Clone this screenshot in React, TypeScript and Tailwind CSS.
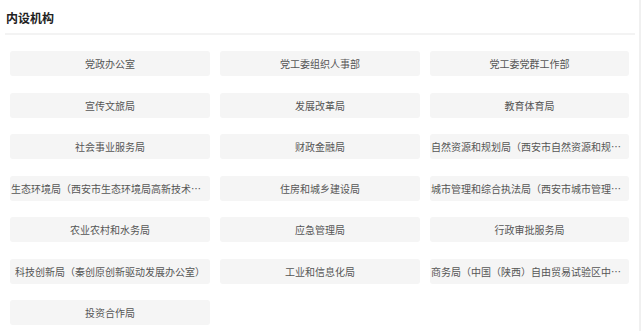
const units = [
  "党政办公室",
  "党工委组织人事部",
  "党工委党群工作部",
  "宣传文旅局",
  "发展改革局",
  "教育体育局",
  "社会事业服务局",
  "财政金融局",
  "自然资源和规划局（西安市自然资源和规划局高新分局）",
  "生态环境局（西安市生态环境局高新技术产业开发区分局）",
  "住房和城乡建设局",
  "城市管理和综合执法局（西安市城市管理综合执法局高新分局）",
  "农业农村和水务局",
  "应急管理局",
  "行政审批服务局",
  "科技创新局（秦创原创新驱动发展办公室）",
  "工业和信息化局",
  "商务局（中国（陕西）自由贸易试验区中心区管理办公室）",
  "投资合作局",
];

export default function App() {
  return (
    <div
      className="flex h-[331px] w-[641px] bg-white"
      style={{ fontFamily: '"Microsoft YaHei", "Noto Sans CJK SC", sans-serif' }}
    >
      <div className="flex-1 pl-[5px] pr-[4px]">
        <h2 className="pl-[1px] pt-[8px] text-[12px] font-bold leading-[20px] text-[#222]">内设机构</h2>
        <div className="mt-[5px] h-[2px] bg-[#f3f3f3]" />
        <div className="ml-[5px] mt-[16px] grid grid-cols-[200px_200px_199px] gap-x-[10px] gap-y-[16.5px]">
          {units.map((name) => (
            <div
              key={name}
              className="h-[25px] truncate rounded-[3px] bg-[#f5f5f5] px-[1px] text-center text-[10px] leading-[25px] text-[#555]"
            >
              {name}
            </div>
          ))}
        </div>
      </div>
      <div className="w-[2px] bg-[#f0f0f0]" />
    </div>
  );
}
